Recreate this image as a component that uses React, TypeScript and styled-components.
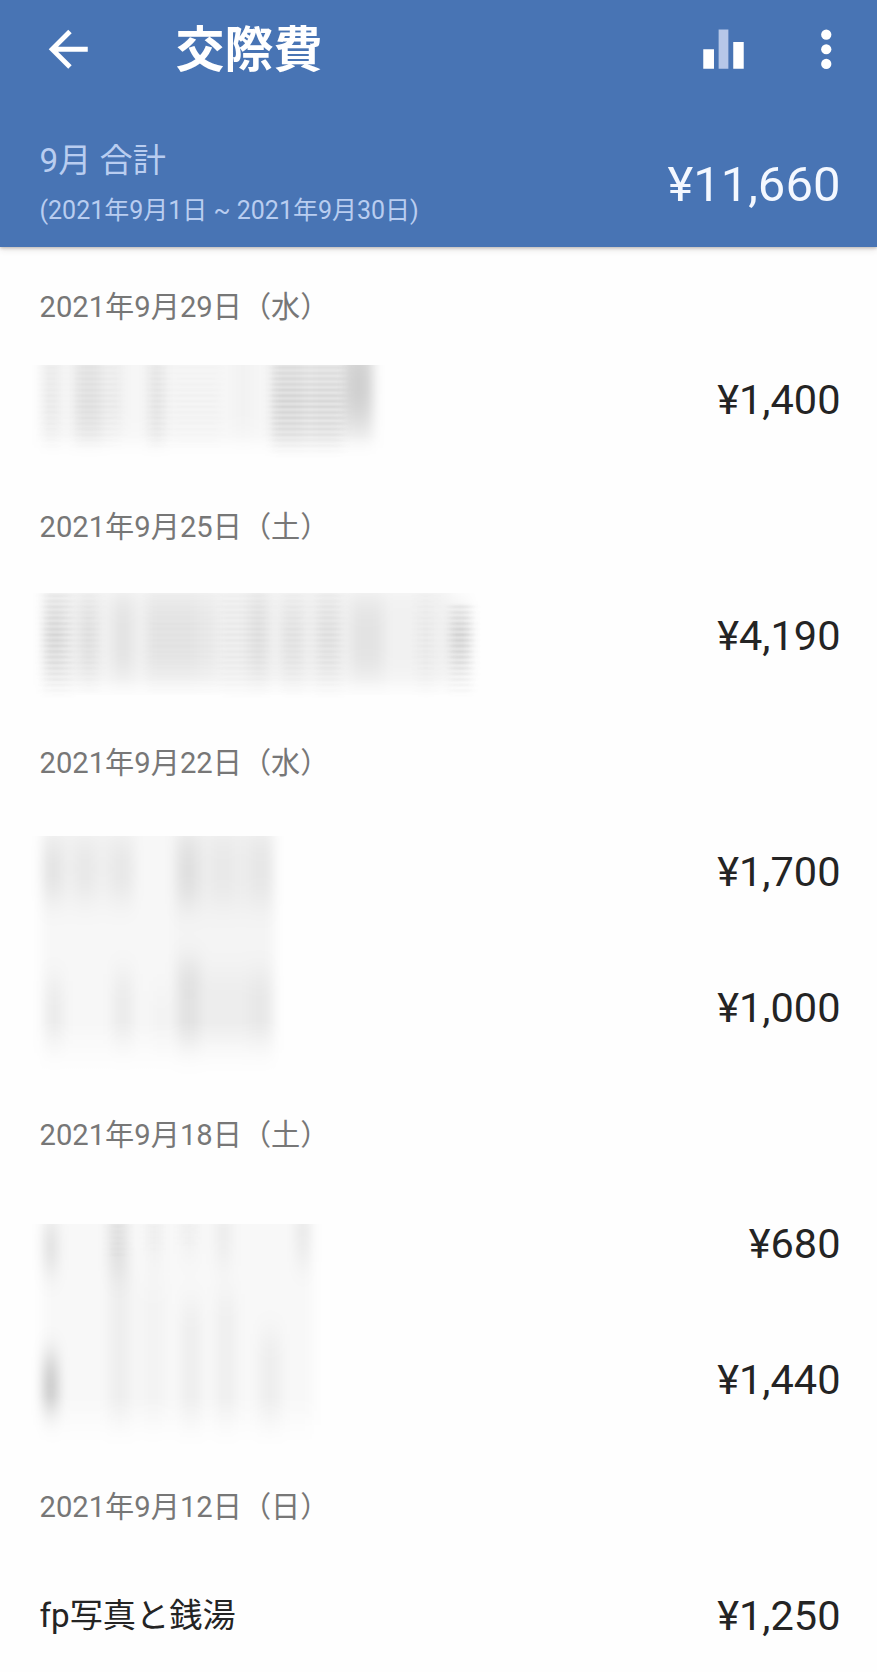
import React from "react";
import styled, { createGlobalStyle } from "styled-components";

const GlobalStyle = createGlobalStyle`
  html, body { margin: 0; padding: 0; background: #fefefe; }
  * { box-sizing: border-box; }
  body { overflow: hidden; }
`;

const Screen = styled.main`
  width: 100%;
  height: 1672px;
  overflow: hidden;
  background: #fefefe;
  color: #242424;
  font-family: Roboto, "Noto Sans CJK JP", sans-serif;
`;

const Header = styled.header`
  position: relative;
  height: 247px;
  background: #4874b4;
  box-shadow: 0 1px 3px rgba(70, 60, 50, 0.3), 0 3px 6px rgba(70, 60, 50, 0.12);
`;

const Toolbar = styled.div`
  display: flex;
  align-items: center;
  height: 98px;
  padding: 0 22px 0 39px;
`;

const Icon = styled.svg`
  width: 58.5px;
  height: 58.5px;
  flex: none;
  fill: #fff;
  display: block;
`;

const Actions = styled.div`
  display: flex;
  gap: 44px;
  margin-left: auto;
`;

const Title = styled.h1`
  margin: 0 0 0 77.9px;
  padding-top: 4px;
  font-size: 49px;
  line-height: 60px;
  font-weight: 700;
  color: #fff;
`;

const Summary = styled.div`
  display: flex;
  justify-content: space-between;
  height: 149px;
  padding: 42px 36.5px 0 39.5px;
`;

const Period = styled.div`
  color: #b9cdf0;
`;

const PeriodName = styled.div`
  font-size: 33.2px;
  line-height: 42px;
`;

const PeriodRange = styled.div`
  margin-top: 13px;
  font-size: 25px;
  line-height: 32px;
`;

const Total = styled.div`
  margin-top: 16px;
  font-size: 49px;
  line-height: 58px;
  color: #f4f8ff;
`;

const DayTitle = styled.h2<{ $first?: boolean }>`
  margin: 0;
  padding: ${(p) => (p.$first ? "43px 0 8px" : "42px 0 24px")};
  font-size: 29.2px;
  line-height: 34px;
  font-weight: 400;
  color: #777;
`;

const Day = styled.section`
  padding: 0 36.5px 0 39.5px;
`;

const Entries = styled.div`
  position: relative;
`;

const Entry = styled.div`
  display: flex;
  align-items: center;
  height: 136px;
`;

const EntryName = styled.span`
  font-size: 33.2px;
  line-height: 44px;
`;

const Amount = styled.span`
  margin-left: auto;
  font-size: 41.5px;
  line-height: 50px;
`;

const Mask = styled.svg<{ $top: number }>`
  position: absolute;
  left: -11px;
  top: ${(p) => p.$top}px;
  display: block;
`;

/* x, y, width, height, grey opacity; origin is 29px from the screen edge */
type Band = [number, number, number, number, number];

interface Smudge {
  top: number;
  width: number;
  height: number;
  bands: Band[];
  stripes?: Band[];
}

function HiddenNames({ id, top, width, height, bands, stripes = [] }: Smudge & { id: string }) {
  return (
    <Mask $top={top} width={width} height={height} viewBox={`0 0 ${width} ${height}`} aria-hidden="true">
      <defs>
        <filter id={`${id}-blur`} x="-20%" y="-60%" width="140%" height="220%">
          <feGaussianBlur stdDeviation="6 15" />
        </filter>
        <filter id={`${id}-soft`} x="-20%" y="-30%" width="140%" height="160%">
          <feGaussianBlur stdDeviation="5 0.8" />
        </filter>
        <pattern id={`${id}-lines`} width="20" height="5.6" patternUnits="userSpaceOnUse">
          <rect width="20" height="2.2" y="1.5" fill="#000" />
        </pattern>
        <linearGradient id={`${id}-fade`} x1="0" y1="0" x2="0" y2="1">
          <stop offset="0" stopColor="#fff" stopOpacity="0.5" />
          <stop offset="0.35" stopColor="#fff" />
          <stop offset="0.6" stopColor="#fff" stopOpacity="0.8" />
          <stop offset="1" stopColor="#fff" stopOpacity="0" />
        </linearGradient>
        <linearGradient id={`${id}-edge`} x1="0" y1="0" x2="0" y2="1">
          <stop offset="0.75" stopColor="#fff" />
          <stop offset="1" stopColor="#fff" stopOpacity="0" />
        </linearGradient>
        <mask id={`${id}-mask`}>
          <rect width={width} height={height} fill={`url(#${id}-fade)`} />
        </mask>
        <mask id={`${id}-bottom`}>
          <rect width={width} height={height} fill={`url(#${id}-edge)`} />
        </mask>
      </defs>
      <g mask={`url(#${id}-bottom)`}>
        <g filter={`url(#${id}-blur)`}>
          {bands.map(([x, y, w, h, o], i) => (
            <rect key={i} x={x} y={y} width={w} height={h} fill="#000" opacity={o} />
          ))}
        </g>
      </g>
      <g mask={`url(#${id}-mask)`}>
        <g filter={`url(#${id}-soft)`}>
          {stripes.map(([x, y, w, h, o], i) => (
            <rect key={i} x={x} y={y} width={w} height={h} fill={`url(#${id}-lines)`} opacity={o} />
          ))}
        </g>
      </g>
    </Mask>
  );
}

interface DayData {
  date: string;
  entries: { name?: string; amount: string }[];
  smudge?: Smudge;
}

const days: DayData[] = [
  {
    date: "2021年9月29日（水）",
    entries: [{ amount: "¥1,400" }],
    smudge: {
      top: 33, width: 370, height: 95,
      bands: [
        [12, -30, 334, 110, 0.03],
        [14, -20, 16, 90, 0.04],
        [46, -20, 28, 95, 0.065],
        [80, -20, 14, 85, 0.03],
        [120, -20, 14, 100, 0.06],
        [205, -20, 18, 90, 0.02],
        [243, -20, 34, 103, 0.065],
        [280, -20, 32, 103, 0.055],
        [315, -35, 28, 100, 0.13],
        [318, 8, 26, 24, 0.06],
      ],
      stripes: [
        [14, 0, 16, 85, 0.03],
        [45, 0, 45, 85, 0.045],
        [120, 0, 20, 85, 0.045],
        [145, 0, 45, 85, 0.03],
        [243, 0, 72, 92, 0.115],
      ],
    },
  },
  {
    date: "2021年9月25日（土）",
    entries: [{ amount: "¥4,190" }],
    smudge: {
      top: 25, width: 465, height: 115,
      bands: [
        [14, -10, 408, 102, 0.05],
        [16, 12, 18, 62, 0.055],
        [50, 8, 18, 72, 0.05],
        [84, 5, 20, 77, 0.06],
        [118, 5, 50, 76, 0.05],
        [168, 5, 18, 75, 0.03],
        [220, 0, 18, 82, 0.05],
        [253, 12, 20, 70, 0.045],
        [289, 8, 20, 70, 0.045],
        [322, 8, 32, 74, 0.06],
        [388, 10, 17, 76, 0.015],
        [422, 18, 18, 56, 0.1],
      ],
      stripes: [
        [15, 0, 28, 104, 0.1],
        [50, 0, 20, 100, 0.045],
        [118, 0, 80, 100, 0.02],
        [195, 0, 45, 106, 0.05],
        [253, 0, 25, 104, 0.045],
        [285, 0, 28, 106, 0.06],
        [388, 0, 18, 104, 0.035],
        [421, 11, 22, 92, 0.13],
      ],
    },
  },
  {
    date: "2021年9月22日（水）",
    entries: [{ amount: "¥1,700" }, { amount: "¥1,000" }],
    smudge: {
      top: 32, width: 275, height: 248,
      bands: [
        [13, -30, 232, 255, 0.027],
        [13, -5, 92, 70, 0.035],
        [14, 10, 19, 50, 0.05],
        [47, 10, 18, 50, 0.035],
        [82, 10, 22, 50, 0.035],
        [145, -8, 100, 76, 0.045],
        [149, 4, 20, 62, 0.06],
        [185, 4, 18, 58, 0.025],
        [222, 4, 20, 58, 0.03],
        [145, 60, 100, 90, 0.015],
        [16, 145, 18, 66, 0.05],
        [84, 138, 20, 73, 0.05],
        [122, 155, 22, 58, 0.02],
        [148, 128, 24, 88, 0.085],
        [174, 140, 70, 74, 0.045],
        [220, 140, 22, 68, 0.025],
      ],
    },
  },
  {
    date: "2021年9月18日（土）",
    entries: [{ amount: "¥680" }, { amount: "¥1,440" }],
    smudge: {
      top: 48, width: 310, height: 230,
      bands: [
        [14, -30, 270, 240, 0.022],
        [14, 0, 15, 46, 0.1],
        [14, 133, 15, 58, 0.2],
        [80, -20, 18, 67, 0.09],
        [80, 35, 22, 172, 0.045],
        [119, -20, 13, 60, 0.04],
        [112, 60, 24, 142, 0.022],
        [153, -20, 15, 50, 0.035],
        [152, 80, 20, 128, 0.045],
        [187, -20, 15, 60, 0.05],
        [187, 70, 20, 135, 0.04],
        [230, 110, 22, 98, 0.045],
        [268, -20, 12, 58, 0.07],
      ],
      stripes: [
        [80, 0, 18, 34, 0.035],
        [116, 0, 16, 26, 0.02],
        [150, 0, 16, 24, 0.02],
      ],
    },
  },
  {
    date: "2021年9月12日（日）",
    entries: [{ name: "fp写真と銭湯", amount: "¥1,250" }],
  },
];

export default function App() {
  return (
    <Screen>
      <GlobalStyle />
      <Header>
        <Toolbar>
          <Icon viewBox="0 0 24 24" role="img" aria-label="戻る">
            <path d="M20 11H7.83l5.59-5.59L12 4l-8 8 8 8 1.41-1.41L7.83 13H20v-2z" />
          </Icon>
          <Title>交際費</Title>
          <Actions>
            <Icon viewBox="0 0 24 24" role="img" aria-label="グラフ">
              <path d="M3.8 12h4.4v8H3.8zM16.1 9h4.3v11h-4.3z" />
              <path d="M10.1 3.9h4V20h-4z" fill="#b6c7e8" />
            </Icon>
            <Icon viewBox="0 0 24 24" role="img" aria-label="メニュー">
              <circle cx="12" cy="6" r="2.1" />
              <circle cx="12" cy="12" r="2.1" />
              <circle cx="12" cy="18" r="2.1" />
            </Icon>
          </Actions>
        </Toolbar>
        <Summary>
          <Period>
            <PeriodName>9月 合計</PeriodName>
            <PeriodRange>(2021年9月1日 ~ 2021年9月30日)</PeriodRange>
          </Period>
          <Total>¥11,660</Total>
        </Summary>
      </Header>
      {days.map((day, d) => (
        <Day key={day.date}>
          <DayTitle $first={d === 0}>{day.date}</DayTitle>
          <Entries>
            {day.entries.map((entry) => (
              <Entry key={entry.amount}>
                {entry.name && <EntryName>{entry.name}</EntryName>}
                <Amount>{entry.amount}</Amount>
              </Entry>
            ))}
            {day.smudge && <HiddenNames id={`day${d}`} {...day.smudge} />}
          </Entries>
        </Day>
      ))}
    </Screen>
  );
}
